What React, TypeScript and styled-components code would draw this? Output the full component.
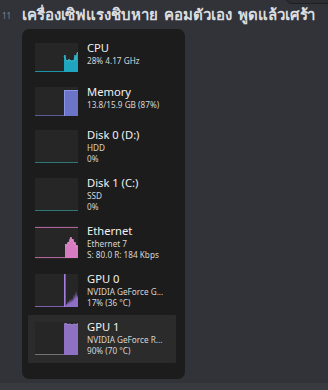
import React from "react";
import styled, { createGlobalStyle } from "styled-components";

const Global = createGlobalStyle`
  html, body { margin: 0; padding: 0; background: #313338; }
  body { width: 328px; height: 390px; overflow: hidden; }
  #root { position: relative; width: 328px; height: 390px; }
`;

const Page = styled.div`
  position: relative;
  width: 328px;
  height: 390px;
  display: flex;
  flex-direction: column;
  background: #313338;
  font-family: "Noto Sans", "Open Sans", sans-serif;
`;

const Message = styled.div`
  flex: 1;
  display: flex;
`;

const Gutter = styled.div`
  width: 22px;
  flex: none;
  overflow: hidden;
  padding-top: 11px;
  box-sizing: border-box;
`;

const Stamp = styled.span`
  display: block;
  font-size: 8px;
  line-height: 9px;
  color: #80848e;
  margin-left: 2px;
`;

const Body = styled.div`
  display: flex;
  flex-direction: column;
  min-width: 0;
`;

const Content = styled.div`
  height: 29px;
  padding-top: 3px;
  box-sizing: border-box;
  font-size: 15px;
  line-height: 22px;
  font-weight: 600;
  letter-spacing: -0.1px;
  word-spacing: 3px;
  color: #dbdee1;
  white-space: nowrap;
`;

const Panel = styled.div`
  width: 163px;
  height: 350px;
  box-sizing: border-box;
  border-radius: 7px;
  background: #1c1c1c;
  padding: 6px 9px 16px 6px;
  display: flex;
  flex-direction: column;
`;

const Row = styled.div<{ $tall?: boolean; $selected?: boolean }>`
  height: ${(p) => (p.$tall ? 48 : 44)}px;
  display: flex;
  align-items: flex-start;
  gap: 9px;
  padding-left: 7px;
  box-sizing: border-box;
  background: ${(p) => (p.$selected ? "#2b2b2b" : "transparent")};
  border-radius: 1px;
`;

const Graph = styled.div<{ $tall?: boolean }>`
  width: 43px;
  height: ${(p) => (p.$tall ? 33 : 29)}px;
  margin-top: ${(p) => (p.$tall ? 7 : 8)}px;
  background: #262626;
  flex: none;
  display: flex;
  svg { display: block; }
`;

const Info = styled.div<{ $tall?: boolean }>`
  margin-top: ${(p) => (p.$tall ? 5 : 6)}px;
  display: flex;
  flex-direction: column;
  min-width: 0;
`;

const Name = styled.div`
  font-size: 11.2px;
  line-height: 14px;
  color: #f2f2f2;
  white-space: nowrap;
`;

const Sub = styled.div`
  font-size: 8.2px;
  line-height: 11px;
  color: #d6d6d6;
  white-space: nowrap;
`;

const Footer = styled.div`
  height: 7px;
  flex: none;
  background: #383a40;
`;

const Corner = styled.div`
  position: absolute;
  top: -10px;
  right: -4px;
  width: 44px;
  height: 12px;
  border-radius: 0 0 0 6px;
  background: #2b2d31;
  border: 1px solid #1e1f22;
`;

const Dot = styled.div`
  position: absolute;
  top: -6px;
  left: 9px;
  width: 10px;
  height: 10px;
  border-radius: 50%;
  background: #b5bac1;
`;

type Kind = "cpu" | "mem" | "disk" | "eth" | "gpu0" | "gpu1";

function Chart({ kind, h }: { kind: Kind; h: number }) {
  const w = 43;
  if (kind === "cpu") {
    const pts = "29,14 30,12 31,18 32,17 33,19 34,16 35,18 36,17 37,19 38,17 39,18 40,12 41,17 42,10 43,9";
    return (
      <svg width={w} height={h} viewBox={`0 0 ${w} ${h}`}>
        <line x1="0" y1={h - 0.5} x2="29" y2={h - 0.5} stroke="#1a93a8" strokeWidth="1" />
        <polygon points={`29,${h} ${pts} 43,${h}`} fill="#1fa5bd" />
        <polyline points={pts} fill="none" stroke="#3cc6dc" strokeWidth="0.8" />
      </svg>
    );
  }
  if (kind === "mem") {
    return (
      <svg width={w} height={h} viewBox={`0 0 ${w} ${h}`}>
        <line x1="0" y1={h - 0.5} x2="29" y2={h - 0.5} stroke="#5a5f98" strokeWidth="1" />
        <rect x="29" y="3" width="14" height={h - 3} fill="#6c74c8" />
        <line x1="29" y1="3.5" x2="43" y2="3.5" stroke="#8c94e8" strokeWidth="1" />
        <line x1="29.5" y1="3" x2="29.5" y2={h} stroke="#8c94e8" strokeWidth="1" />
      </svg>
    );
  }
  if (kind === "disk") {
    return (
      <svg width={w} height={h} viewBox={`0 0 ${w} ${h}`}>
        <line x1="0" y1={h - 0.5} x2={w} y2={h - 0.5} stroke="#2e7777" strokeWidth="1" />
      </svg>
    );
  }
  if (kind === "eth") {
    const pts = "30,19 31,18 32,20 33,16 34,17 35,13 36,11 37,15 38,13 39,18 40,16 41,21 42,19 43,23";
    return (
      <svg width={w} height={h} viewBox={`0 0 ${w} ${h}`}>
        <line x1="0" y1="1.5" x2={w} y2="1.5" stroke="#b2619d" strokeWidth="1.2" />
        <line x1="0" y1={h - 1.5} x2={w} y2={h - 1.5} stroke="#b2619d" strokeWidth="1.2" />
        <polygon points={`30,${h - 1} ${pts} 43,${h - 1}`} fill="#d77cc2" />
        <polyline points={pts} fill="none" stroke="#ec9ad8" strokeWidth="0.8" />
      </svg>
    );
  }
  if (kind === "gpu0") {
    const pts = "31,30 32,31 33,27 34,30 35,25 36,29 37,24 38,28 39,20 40,26 41,17 42,24 43,21";
    return (
      <svg width={w} height={h} viewBox={`0 0 ${w} ${h}`}>
        <line x1="0" y1={h - 0.5} x2={w} y2={h - 0.5} stroke="#7d60b0" strokeWidth="1" />
        <rect x="29" y="0" width="1.6" height={h} fill="#a47fe0" />
        <polygon points={`31,${h} ${pts} 43,${h}`} fill="#8f6ec8" />
      </svg>
    );
  }
  const top = "29,2 31,1.5 33,2.5 35,2 37,3 39,2 41,2.5 43,1.5";
  return (
    <svg width={w} height={h} viewBox={`0 0 ${w} ${h}`}>
      <line x1="0" y1={h - 0.5} x2="29" y2={h - 0.5} stroke="#c9c9c9" strokeWidth="0.8" opacity="0.6" />
      <polygon points={`29,${h} ${top} 43,${h}`} fill="#8e71c2" />
      <polyline points={top} fill="none" stroke="#b095e6" strokeWidth="0.8" />
    </svg>
  );
}

type Item = { name: string; lines: string[]; kind: Kind; selected?: boolean };

const items: Item[] = [
  { name: "CPU", lines: ["28%  4.17 GHz"], kind: "cpu" },
  { name: "Memory", lines: ["13.8/15.9 GB (87%)"], kind: "mem" },
  { name: "Disk 0 (D:)", lines: ["HDD", "0%"], kind: "disk" },
  { name: "Disk 1 (C:)", lines: ["SSD", "0%"], kind: "disk" },
  { name: "Ethernet", lines: ["Ethernet 7", "S: 80.0  R: 184 Kbps"], kind: "eth" },
  { name: "GPU 0", lines: ["NVIDIA GeForce G...", "17%  (36 °C)"], kind: "gpu0" },
  { name: "GPU 1", lines: ["NVIDIA GeForce R...", "90%  (70 °C)"], kind: "gpu1", selected: true },
];

export default function App() {
  return (
    <Page>
      <Global />
      <Message>
        <Gutter>
          <Stamp>11</Stamp>
        </Gutter>
        <Body>
          <Content>เครื่องเซิฟแรงชิบหาย คอมตัวเอง พูดแล้วเศร้า</Content>
          <Panel>
            {items.map((it) => {
              const tall = it.lines.length > 1;
              return (
                <Row key={it.name} $tall={tall} $selected={it.selected}>
                  <Graph $tall={tall}>
                    <Chart kind={it.kind} h={tall ? 33 : 29} />
                  </Graph>
                  <Info $tall={tall}>
                    <Name>{it.name}</Name>
                    {it.lines.map((l) => (
                      <Sub key={l}>{l}</Sub>
                    ))}
                  </Info>
                </Row>
              );
            })}
          </Panel>
        </Body>
      </Message>
      <Footer />
      <Corner>
        <Dot />
      </Corner>
    </Page>
  );
}
